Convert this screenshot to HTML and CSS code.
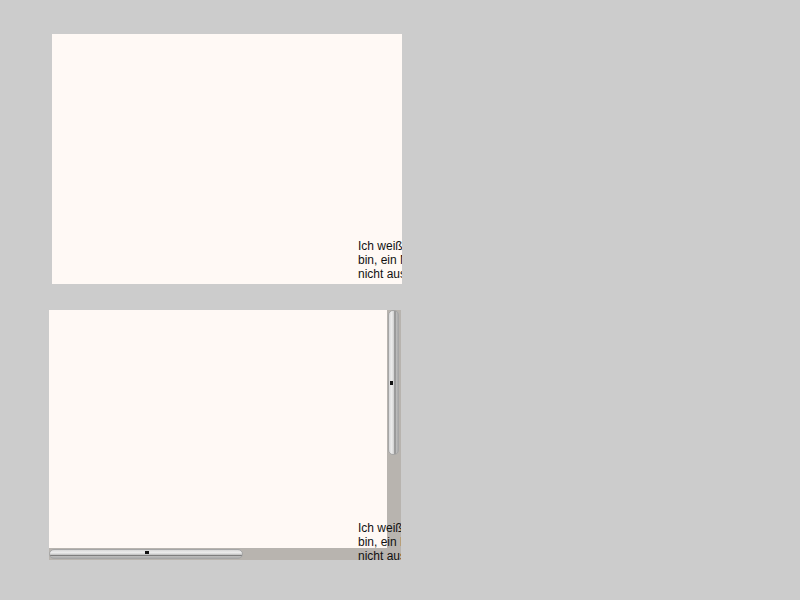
FILE: index.html
```html
<!DOCTYPE html>
<html lang="de">
<head>
    <meta charset="UTF-8">
    <title>Overflow</title>
    <link rel="stylesheet" href="styles.css">
</head>
<body>

<div class="box box-hidden">
    <p class="poem">Ich weiß nicht, was soll es bedeuten, dass ich so traurig<br>bin, ein Märchen aus alten Zeiten, das kommt mir<br>nicht aus dem Sinn.</p>
</div>

<div class="box box-scroll">
    <div class="vbar"><div class="vthumb"><span class="grip"></span></div></div>
    <div class="hbar"><div class="hthumb"><span class="grip"></span></div></div>
    <p class="poem">Ich weiß nicht, was soll es bedeuten, dass ich so traurig<br>bin, ein Märchen aus alten Zeiten, das kommt mir<br>nicht aus dem Sinn.</p>
</div>

</body>
</html>
```

FILE: styles.css
```css
body {
    margin: 0;
    background-color: #cccccc;
    font-family: "Liberation Sans", Arial, sans-serif;
}
.box {
    position: relative;
    overflow: hidden;
    width: 350px;
    height: 250px;
    background-color: #fff9f5;
}
.box-hidden {
    margin: 34px 0 0 52px;
}
.box-scroll {
    margin: 26px 0 0 49px;
    width: 352px;
}
.poem {
    position: absolute;
    margin: 0;
    white-space: nowrap;
    font-size: 12px;
    line-height: 14px;
    color: #111;
}
.box-hidden .poem {
    left: 306px;
    top: 205px;
}
.box-scroll .poem {
    left: 309px;
    top: 211px;
}
.vbar {
    position: absolute;
    right: 0;
    top: 0;
    width: 14px;
    height: 238px;
    background-color: #b8b4af;
}
.hbar {
    position: absolute;
    left: 0;
    bottom: 0;
    width: 100%;
    height: 12px;
    background-color: #b8b4af;
}
.vthumb {
    position: absolute;
    left: 1px;
    top: 0;
    width: 11px;
    height: 145px;
    border-radius: 5px;
    background: linear-gradient(to right, #d8d8d8, #ececec 30%, #cfcfcf 55%, #7a7a7a 65%, #bdbdbd 80%, #a9a9a9);
    border: 1px solid #a6a6a6;
    box-sizing: border-box;
}
.hthumb {
    position: absolute;
    left: 0;
    top: 1px;
    width: 194px;
    height: 10px;
    border-radius: 5px;
    background: linear-gradient(to bottom, #d8d8d8, #ececec 30%, #cfcfcf 55%, #7a7a7a 68%, #bdbdbd 82%, #a9a9a9);
    border: 1px solid #a6a6a6;
    box-sizing: border-box;
}
.vthumb .grip {
    position: absolute;
    left: 1px;
    top: 70px;
    width: 3px;
    height: 4px;
    background-color: #111;
}
.hthumb .grip {
    position: absolute;
    left: 95px;
    top: 1px;
    width: 4px;
    height: 3px;
    background-color: #111;
}
```
